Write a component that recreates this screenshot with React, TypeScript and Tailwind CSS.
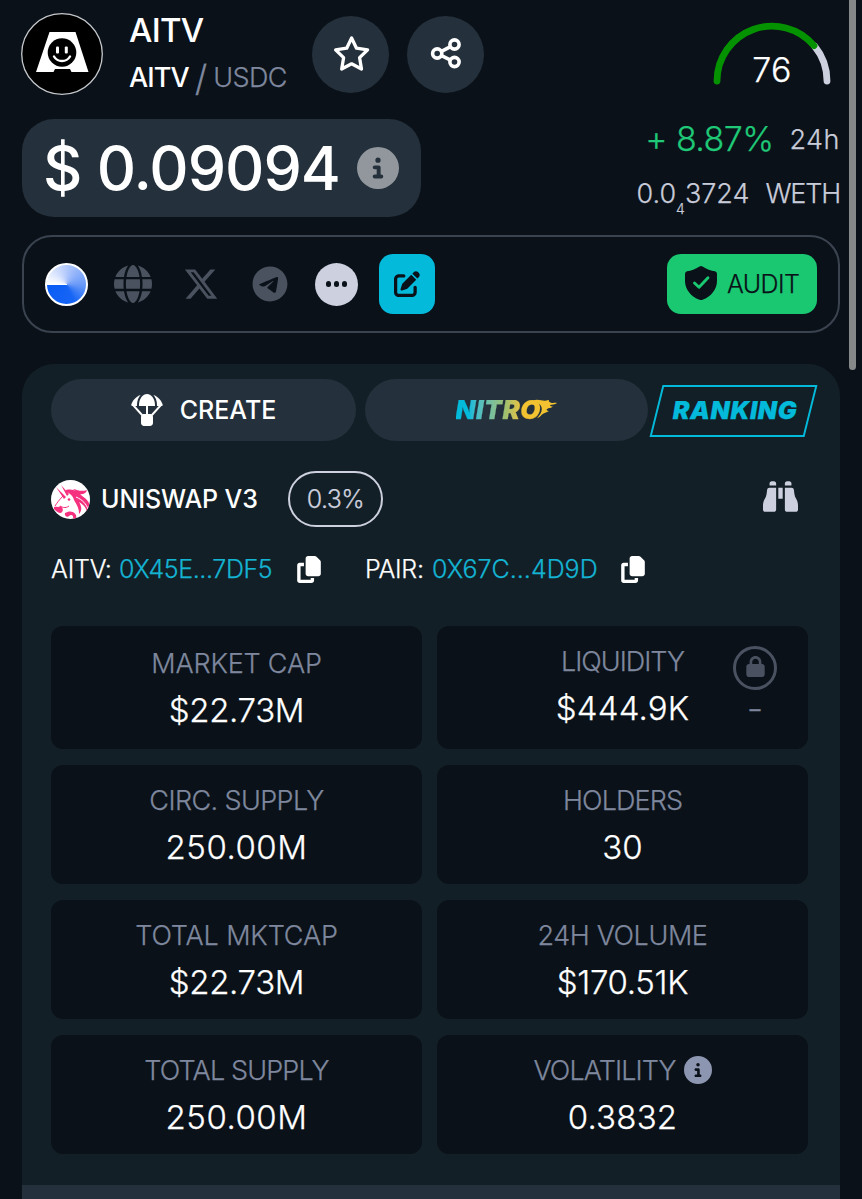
import type { ReactNode } from "react";
import {
  FaBinoculars,
  FaCircleInfo,
  FaCopy,
  FaGlobe,
  FaLock,
  FaParachuteBox,
  FaPenToSquare,
  FaTelegram,
  FaXTwitter,
} from "react-icons/fa6";

function Avatar() {
  return (
    <svg className="size-[82px] shrink-0" viewBox="0 0 82 82">
      <circle cx="41" cy="41" r="40.3" fill="#000" stroke="#c4c8cc" strokeWidth="1.3" />
      <path d="M28.500 19H54.500L67.500 59H50.500L49 56H34L32.500 59H15Z" fill="#fff" />
      <circle cx="41" cy="39.500" r="14.300" fill="#000" />
      <rect x="35" y="33.500" width="3" height="7" rx="1" fill="#fff" />
      <rect x="43.800" y="33.500" width="3" height="7" rx="1" fill="#fff" />
      <path d="M33 43.500C36.500 49.500 45.500 49.500 49 43.500" fill="none" stroke="#fff" strokeWidth="2.400" strokeLinecap="round" />
    </svg>
  );
}

function RoundButton({ children }: { children: ReactNode }) {
  return (
    <button className="flex size-[77px] shrink-0 items-center justify-center rounded-full bg-[#24303b]">
      {children}
    </button>
  );
}

function StarIcon() {
  return (
    <svg className="size-[40px]" viewBox="0 0 40 40" fill="none" stroke="#fff" strokeWidth="3.300" strokeLinejoin="round">
      <path d="M20.600 3 25.500 13.200 36.600 14.800 28.600 22.700 30.500 34 20.600 28.800 10.700 34 12.600 22.700 4.600 14.800 15.700 13.200Z" />
    </svg>
  );
}

function ShareIcon() {
  return (
    <svg className="size-[40px]" viewBox="0 0 40 40" fill="none" stroke="#fff" strokeWidth="3.600">
      <circle cx="11.200" cy="18.500" r="4.600" />
      <circle cx="28.500" cy="9.500" r="4.600" />
      <circle cx="28.500" cy="27" r="4.600" />
      <path d="M15.500 16.300 24.100 11.800M15.500 20.700 24.100 24.800" />
    </svg>
  );
}

function Gauge({ score }: { score: number }) {
  return (
    <div className="relative h-[70px] w-[120px]">
      <svg className="size-full" viewBox="0 0 120 70" fill="none" strokeWidth="6.800" strokeLinecap="round">
        <path d="M102.500 30A55 55 0 0 1 115 65" stroke="#cdd0df" />
        <path d="M5 65A55 55 0 0 1 102 29.600" stroke="#059200" />
      </svg>
      <span className="absolute inset-x-0 top-[34px] text-center text-[34px] leading-[40px] font-light tracking-[0.4px] text-white">{score}</span>
    </div>
  );
}

function ShieldIcon() {
  return (
    <svg className="h-[36px] w-[34px]" viewBox="0 0 34 36">
      <path d="M15.500 1.400Q17 .6 18.500 1.400C22.500 4 27 5.600 31 6.300Q33 6.800 33 9V16C33 24.500 27 31.500 18.500 34.800Q17 35.400 15.500 34.800C7 31.500 1 24.500 1 16V9Q1 6.800 3 6.300C7 5.600 11.500 4 15.500 1.400Z" fill="#0a1118" />
      <path d="M10.500 18 15 22.300 24 12.800" fill="none" stroke="#19c871" strokeWidth="2.900" strokeLinecap="round" strokeLinejoin="round" />
    </svg>
  );
}

function UnicornLogo() {
  return (
    <svg className="size-[39px] shrink-0" viewBox="0 0 39 39">
      <defs>
        <clipPath id="unicorn-clip"><circle cx="19.500" cy="19.500" r="19.500" /></clipPath>
      </defs>
      <g clipPath="url(#unicorn-clip)">
        <rect width="39" height="39" fill="#fff" />
        <g fill="#f5317f">
          <path d="M15 10C22 8.500 27 11 30 15C35 19 39 21 39 29L36 35C36 28 33 25 28 22C31 27 31 30 28 34C28 27 25 24 23 20C22 16 19 13 15 12Z" />
          <path d="M22 9C27 10 30 12 36 10C35 14 31 15 28 14Z" />
          <path d="M5 7 15 17 13 19Z M10 5 18 14 16 16Z" />
          <path d="M3 27C6 26 7 28 9 26C12 27 13 31 10 33C7 33 5 31 3 29Z" />
          <path d="M14 33C20 29 27 33 25 39H22C23 35 20 34 18 36C17 38 13 36 14 33Z" />
        </g>
        <path d="M12 16C8 20 6 23 4 26M18 26C14 29 11 27 9 26" fill="none" stroke="#f5317f" strokeWidth="1" />
        <path d="M25 17C32 20 35 24 37 29" fill="none" stroke="#fff" strokeWidth="1" />
        <circle cx="18" cy="19.500" r="1.300" fill="#f5317f" />
      </g>
    </svg>
  );
}

function Flame() {
  return (
    <svg className="absolute top-[2px] left-[75px] h-[22px] w-[27px]" viewBox="0 0 27 22" fill="#f2c230">
      <path d="M2 1.500C7 -.3 11 2 14 1.800C16 1.600 17 1 18 1C17.500 2 18 3 20 3.800C22 4.600 24 3.500 26 4C24 5.800 21 5.300 19 6C19 7.500 21 7.500 22 7.600C20 9.500 18 8.500 15.500 10.500C16 11.800 17 12 18 12C15.500 13.800 13 13.600 11 15.500C10 17 8 18.500 6 19C9.500 16 11.500 12 10.500 8C9.500 5 6 3 2 1.500Z" />
    </svg>
  );
}

type CardProps = { label: ReactNode; value: string; labelClass?: string; valueClass?: string; raised?: boolean; children?: ReactNode };

function Card({ label, value, labelClass = "", valueClass = "", raised = false, children }: CardProps) {
  return (
    <div className={`relative flex flex-col items-center justify-center rounded-xl bg-[#0a1118] ${raised ? "pb-[6px]" : "pb-[2px]"}`}>
      <div className={`flex h-[47px] items-center whitespace-nowrap text-[27px] font-light text-[#7e879d] ${labelClass}`}>{label}</div>
      <div className={`flex h-[47px] items-center whitespace-nowrap text-[33px] font-light text-white ${valueClass}`}>{value}</div>
      {children}
    </div>
  );
}

export default function App() {
  return (
    <div className="relative flex h-[1199px] w-[862px] flex-col overflow-hidden bg-[#0a1118] pr-[22px] pl-[22px] font-['Inter',sans-serif] leading-none [-webkit-text-stroke:0.25px]">
      <header className="flex h-[119px] items-start pt-[6px]">
        <div className="-ml-px pt-[7px]"><Avatar /></div>
        <div className="ml-[26px] w-[183px] whitespace-nowrap text-white">
          <div className="flex h-[48px] items-center text-[33px] font-medium tracking-[-0.7px] [-webkit-text-stroke:0]">AITV</div>
          <div className="flex h-[47px] items-center text-[27px]">
            <span className="font-medium tracking-[-0.9px] [-webkit-text-stroke:0]">AITV</span>
            <span className="mr-[6px] ml-[6px] text-[36px] font-light text-[#7e879d]">/</span>
            <span className="font-light tracking-[-0.6px] text-[#7e879d]">USDC</span>
          </div>
        </div>
        <div className="flex gap-[18px] pt-[10px]">
          <RoundButton><StarIcon /></RoundButton>
          <RoundButton><ShareIcon /></RoundButton>
        </div>
        <div className="ml-auto pt-[10px] pr-[8px]"><Gauge score={76} /></div>
      </header>

      <section className="flex h-[98px] justify-between">
        <div className="flex w-[399px] items-center justify-between rounded-[32px] bg-[#24303b] pr-[22px] pl-[21px]">
          <span className="whitespace-nowrap text-[61px] font-medium tracking-[-1px] text-white [-webkit-text-stroke:0]">$ 0.09094</span>
          <FaCircleInfo className="size-[42px] text-[#91979d]" />
        </div>
        <div className="flex flex-col items-end pt-[3px] whitespace-nowrap font-light text-[#c8cbd9]">
          <div className="flex h-[40px] items-center">
            <span className="text-[34px] tracking-[-0.6px] text-[#1fc977]">+ 8.87%</span>
            <span className="ml-[16px] text-[27px] tracking-[0.5px]">24h</span>
          </div>
          <div className="flex h-[68px] items-center pt-[13px] text-[27px]">
            <span>0.0</span>
            <span className="pt-[31px] text-[14px]">4</span>
            <span>3724</span>
            <span className="ml-[16px] tracking-[-1.2px]">WETH</span>
          </div>
        </div>
      </section>

      <section className="mt-[18px] flex h-[98px] w-[818px] shrink-0 items-center rounded-[30px] border-2 border-[#3a434f] pr-[21px] pl-[21px]">
        <div className="size-[43px] rounded-full border-2 border-white bg-[conic-gradient(from_270deg,#ffffff,#a9c2fb_28%,#6a9af8_50%,#1765f5_68%,#0a5cf5)]" />
        <FaGlobe className="ml-[26px] size-[38px] text-[#4a525f]" />
        <FaXTwitter className="ml-[31px] size-[36px] text-[#4a525f]" />
        <FaTelegram className="ml-[33px] size-[36px] text-[#4a525f]" />
        <div className="ml-[27px] flex size-[43px] items-center justify-center gap-[2.500px] rounded-full bg-[#cdd0df]">
          <i className="size-[5.500px] rounded-full bg-[#0a1118]" />
          <i className="size-[5.500px] rounded-full bg-[#0a1118]" />
          <i className="size-[5.500px] rounded-full bg-[#0a1118]" />
        </div>
        <button className="ml-[21px] flex h-[60px] w-[56px] items-center justify-center rounded-[14px] bg-[#03badb]">
          <FaPenToSquare className="size-[26px] text-[#0a1118]" />
        </button>
        <button className="ml-auto flex h-[60px] w-[150px] items-center rounded-[14px] bg-[#19c871] pl-[17px] text-[25px] font-light text-[#0a1118]">
          <span className="pb-[3px]"><ShieldIcon /></span>
          <span className="ml-[9px] tracking-[-0.6px]">AUDIT</span>
        </button>
      </section>

      <main className="mt-[31px] h-[821px] w-[818px] shrink-0 rounded-t-[32px] bg-[#131f26] px-[29px] pt-[15px]">
        <div className="flex h-[62px] items-center whitespace-nowrap">
          <button className="flex h-full w-[305px] shrink-0 items-center justify-center rounded-full bg-[#24303b] text-[25px] font-medium text-white [-webkit-text-stroke:0]">
            <FaParachuteBox className="mr-[17px] size-[32px]" />
            <span>CREATE</span>
          </button>
          <button className="ml-[9px] flex h-full w-[283px] shrink-0 items-center justify-center rounded-full bg-[#24303b]">
            <span className="relative w-[102px] text-left text-[26px] leading-[26px] font-black tracking-[0.5px] italic">
              <span className="bg-linear-to-r from-[#03badb] from-15% via-[#9cc070] via-55% to-[#f2c230] to-75% bg-clip-text pr-[4px] text-transparent">NITRO</span>
              <Flame />
            </span>
          </button>
          <button className="relative mt-[1px] ml-[8px] flex h-[52px] w-[155px] shrink-0 items-center justify-center">
            <span className="absolute inset-0 -skew-x-[14deg] border-2 border-[#03badb]" />
            <span className="pb-px pl-[3px] text-[25px] font-black tracking-[0.6px] text-[#03badb] italic">RANKING</span>
          </button>
        </div>

        <div className="mt-[30px] flex h-[56px] items-center whitespace-nowrap">
          <UnicornLogo />
          <span className="ml-[11px] w-[187px] text-[25px] font-medium tracking-[-0.1px] text-white [-webkit-text-stroke:0]">UNISWAP V3</span>
          <span className="flex h-[56px] w-[95px] items-center justify-center rounded-full border-2 border-[#cdd0df] text-[25px] font-light tracking-[-0.6px] text-[#cdd0df]">0.3%</span>
          <FaBinoculars className="mr-[13px] mb-[6px] ml-auto size-[35px] text-[#cdd0df]" />
        </div>

        <div className="mt-[18px] flex h-[48px] items-center whitespace-nowrap text-[25px] font-light text-white">
          <span className="w-[68px] tracking-[-0.2px]">AITV:</span>
          <span className="w-[178px] tracking-[-0.4px] text-[#13b4d3]">0X45E...7DF5</span>
          <FaCopy className="h-[27px] w-[24px]" />
          <span className="ml-[44px] w-[67px] tracking-[-0.3px]">PAIR:</span>
          <span className="w-[189px] text-[#13b4d3]">0X67C...4D9D</span>
          <FaCopy className="h-[27px] w-[24px]" />
        </div>

        <div className="mt-[33px] grid w-[757px] grid-cols-2 grid-rows-[123px_119px_119px_119px] gap-x-[15px] gap-y-[16px]">
          <Card label="MARKET CAP" value="$22.73M" labelClass="tracking-[-0.2px]" valueClass="tracking-[-0.35px]" />
          <Card label="LIQUIDITY" value="$444.9K" labelClass="tracking-[-1px]" valueClass="tracking-[0.15px]" raised>
            <div className="absolute top-[20px] right-[31px] flex w-[44px] flex-col items-center">
              <span className="flex size-[44px] items-center justify-center rounded-full border-3 border-[#4a5160]">
                <FaLock className="mb-[4px] size-[21px] text-[#4a5160]" />
              </span>
              <span className="mt-[8px] text-[22px] text-[#7e879d]">–</span>
            </div>
          </Card>
          <Card label="CIRC. SUPPLY" value="250.00M" labelClass="tracking-[-0.6px]" valueClass="tracking-[0.5px]" />
          <Card label="HOLDERS" value="30" labelClass="tracking-[-0.9px]" />
          <Card label="TOTAL MKTCAP" value="$22.73M" labelClass="tracking-[-0.15px]" valueClass="tracking-[-0.35px]" />
          <Card label="24H VOLUME" value="$170.51K" labelClass="tracking-[-0.4px]" valueClass="tracking-[-0.3px]" />
          <Card label="TOTAL SUPPLY" value="250.00M" labelClass="tracking-[-0.85px]" valueClass="tracking-[0.5px]" />
          <Card label={<>VOLATILITY<FaCircleInfo className="ml-[8px] size-[28px] text-[#8c96b0]" /></>} value="0.3832" labelClass="tracking-[-0.9px]" valueClass="tracking-[0.2px]" />
        </div>
      </main>
      <div className="h-[14px] w-[818px] shrink-0 bg-[#24303b]" />
      <div className="absolute top-[-10px] left-[849px] h-[380px] w-[7px] rounded-full bg-[#858989]" />
    </div>
  );
}
